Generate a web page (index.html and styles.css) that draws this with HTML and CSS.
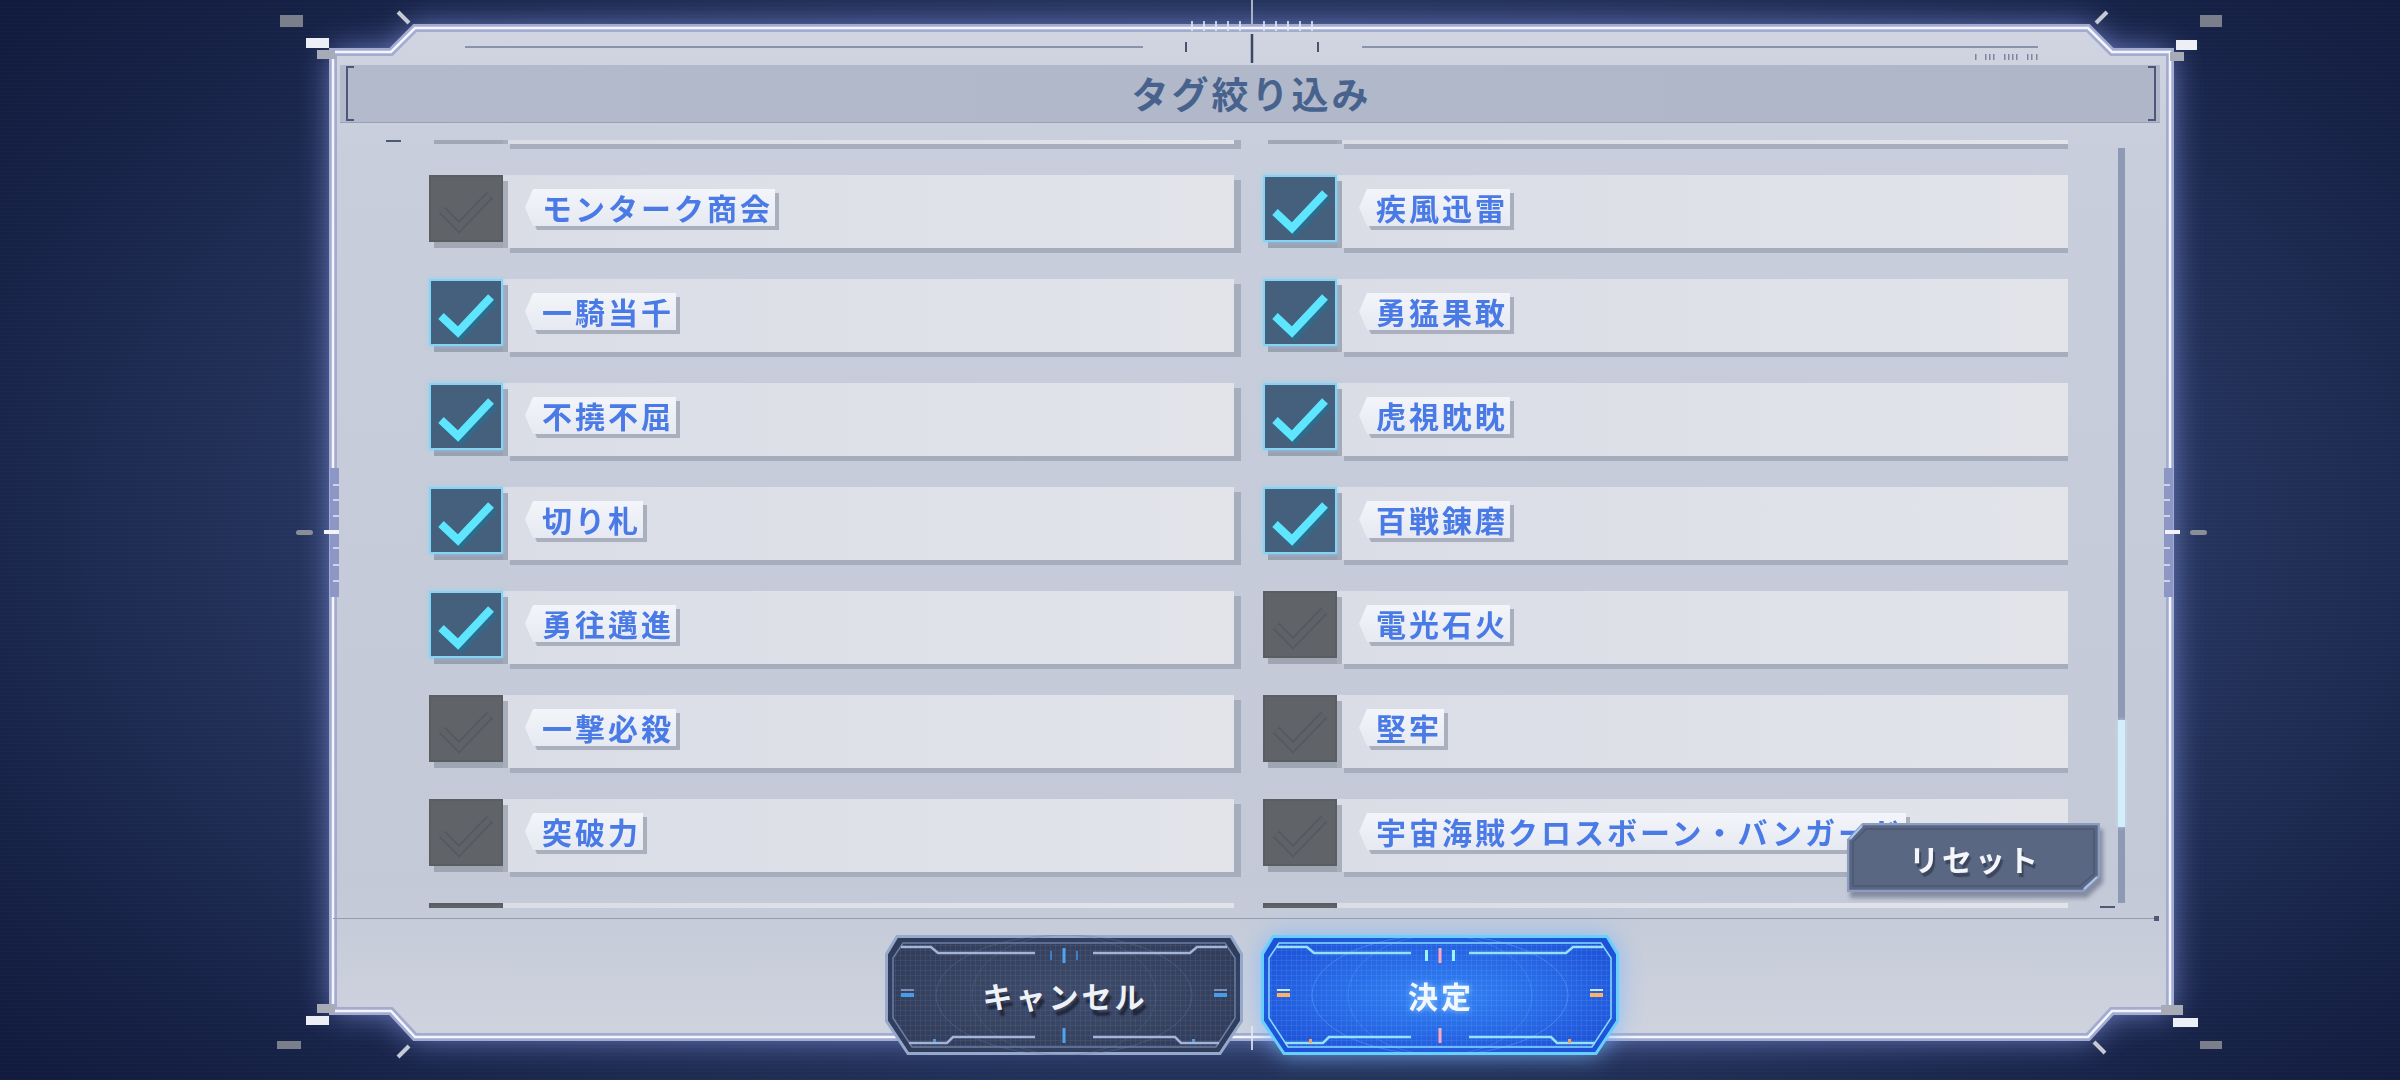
FILE: index.html
```html
<!DOCTYPE html>
<html lang="ja">
<head>
<meta charset="utf-8">
<title>タグ絞り込み</title>
<link rel="stylesheet" href="styles.css">
</head>
<body>
<svg class="defs" aria-hidden="true">
  <symbol id="chk-on" viewBox="0 0 70 63">
    <path d="M10 35 L27 51 L60 16" transform="translate(3 4)" fill="none" stroke="#2d6c8b" stroke-width="8"/>
    <path d="M10 35 L27 51 L60 16" fill="none" stroke="#5fe6ff" stroke-width="8"/>
  </symbol>
  <symbol id="chk-off" viewBox="0 0 70 63">
    <path d="M11 33 L28 50 L59 18" fill="none" stroke="#55585e" stroke-width="9"/>
    <path d="M11 33 L28 50 L59 18" fill="none" stroke="#5f6267" stroke-width="6"/>
  </symbol>
</svg>
<div class="screen">
  <div class="panel">
    <svg class="frame" viewBox="0 0 2400 1080" aria-hidden="true">
      <defs>
        <filter id="glow" x="-10%" y="-10%" width="120%" height="120%"><feGaussianBlur stdDeviation="16"/></filter>
        <linearGradient id="pfill" x1="0" y1="0" x2="0" y2="1">
          <stop offset="0" stop-color="#d0d5e1"/>
          <stop offset="0.12" stop-color="#c8cedb"/>
          <stop offset="0.85" stop-color="#c3c9d7"/>
          <stop offset="1" stop-color="#ced3de"/>
        </linearGradient>
      </defs>
      <polygon points="333,52 391,52 415,28 2088,28 2112,52 2170,52 2170,1011 2112,1011 2088,1037 415,1037 391,1011 333,1011" fill="#8597e6" opacity="0.85" filter="url(#glow)"/>
      <polygon points="333,52 391,52 415,28 2088,28 2112,52 2170,52 2170,1011 2112,1011 2088,1037 415,1037 391,1011 333,1011" fill="url(#pfill)"/>
      <polygon points="333,52 391,52 415,28 2088,28 2112,52 2170,52 2170,1011 2112,1011 2088,1037 415,1037 391,1011 333,1011" fill="none" stroke="#a3acd0" stroke-width="8"/>
      <polygon points="333,52 391,52 415,28 2088,28 2112,52 2170,52 2170,1011 2112,1011 2088,1037 415,1037 391,1011 333,1011" fill="none" stroke="#f4f6ff" stroke-width="2.5"/>
      <!-- top strip lines -->
      <line x1="465" y1="47" x2="1143" y2="47" stroke="#8a93ac" stroke-width="2"/>
      <line x1="1362" y1="47" x2="2038" y2="47" stroke="#8a93ac" stroke-width="2"/>
      <g fill="#7d869e">
        <rect x="1975" y="54" width="1.5" height="6"/>
        <rect x="1985" y="54" width="1.5" height="6"/><rect x="1989" y="54" width="1.5" height="6"/><rect x="1993" y="54" width="1.5" height="6"/>
        <rect x="2004" y="54" width="1.5" height="6"/><rect x="2008" y="54" width="1.5" height="6"/><rect x="2012" y="54" width="1.5" height="6"/><rect x="2016" y="54" width="1.5" height="6"/>
        <rect x="2027" y="54" width="1.5" height="6"/><rect x="2031" y="54" width="1.5" height="6"/><rect x="2036" y="54" width="1.5" height="6"/>
      </g>
      <!-- top ruler -->
      <line x1="1252" y1="0" x2="1252" y2="24" stroke="#a9b0c8" stroke-width="2"/>
      <line x1="1252" y1="34" x2="1252" y2="63" stroke="#3c4764" stroke-width="2.5"/>
      <g stroke="#e6eaf8" stroke-width="1.6">
        <line x1="1192" y1="21" x2="1192" y2="31"/><line x1="1204" y1="21" x2="1204" y2="31"/><line x1="1216" y1="21" x2="1216" y2="31"/><line x1="1228" y1="21" x2="1228" y2="31"/><line x1="1240" y1="21" x2="1240" y2="31"/>
        <line x1="1264" y1="21" x2="1264" y2="31"/><line x1="1276" y1="21" x2="1276" y2="31"/><line x1="1288" y1="21" x2="1288" y2="31"/><line x1="1300" y1="21" x2="1300" y2="31"/><line x1="1312" y1="21" x2="1312" y2="31"/>
      </g>
      <line x1="1186" y1="42" x2="1186" y2="52" stroke="#4a5470" stroke-width="2"/>
      <line x1="1318" y1="42" x2="1318" y2="52" stroke="#4a5470" stroke-width="2"/>
      <!-- bottom tick -->
      <line x1="1252" y1="1026" x2="1252" y2="1050" stroke="#eef1fb" stroke-width="1.6"/>
      <!-- left ruler -->
      <rect x="330" y="468" width="9" height="129" fill="#8c97c6"/>
      <g stroke="#e4e8f6" stroke-width="1.5">
        <line x1="333" y1="485" x2="339" y2="485"/><line x1="333" y1="500" x2="339" y2="500"/><line x1="333" y1="516" x2="339" y2="516"/>
        <line x1="333" y1="548" x2="339" y2="548"/><line x1="333" y1="565" x2="339" y2="565"/><line x1="333" y1="581" x2="339" y2="581"/>
      </g>
      <rect x="324" y="530" width="15" height="4" fill="#f2f4fa"/>
      <rect x="296" y="530" width="17" height="5" rx="2.5" fill="#8b8e98"/>
      <!-- right ruler -->
      <rect x="2164" y="468" width="9" height="129" fill="#8c97c6"/>
      <g stroke="#e4e8f6" stroke-width="1.5">
        <line x1="2164" y1="485" x2="2170" y2="485"/><line x1="2164" y1="500" x2="2170" y2="500"/><line x1="2164" y1="516" x2="2170" y2="516"/>
        <line x1="2164" y1="548" x2="2170" y2="548"/><line x1="2164" y1="565" x2="2170" y2="565"/><line x1="2164" y1="581" x2="2170" y2="581"/>
      </g>
      <rect x="2165" y="530" width="15" height="4" fill="#f2f4fa"/>
      <rect x="2190" y="530" width="17" height="5" rx="2.5" fill="#8b8e98"/>
      <!-- corner decorations -->
      <rect x="280" y="15" width="23" height="12" fill="#8c8f98" opacity="0.85"/>
      <rect x="306" y="38" width="23" height="10" fill="#eceff6"/>
      <rect x="317" y="50" width="18" height="9" fill="#a7abb5"/>
      <line x1="398" y1="12" x2="409" y2="23" stroke="#c5c9d4" stroke-width="4"/>
      <rect x="2200" y="15" width="22" height="12" fill="#8c8f98" opacity="0.85"/>
      <rect x="2176" y="40" width="21" height="10" fill="#eceff6"/>
      <rect x="2170" y="52" width="14" height="9" fill="#a7abb5"/>
      <line x1="2107" y1="12" x2="2096" y2="23" stroke="#c5c9d4" stroke-width="4"/>
      <rect x="277" y="1041" width="24" height="8" fill="#8c8f98" opacity="0.85"/>
      <rect x="306" y="1016" width="23" height="9" fill="#eceff6"/>
      <rect x="317" y="1004" width="18" height="9" fill="#a7abb5"/>
      <line x1="398" y1="1057" x2="409" y2="1046" stroke="#c5c9d4" stroke-width="4"/>
      <rect x="2200" y="1041" width="22" height="8" fill="#8c8f98" opacity="0.85"/>
      <rect x="2173" y="1018" width="25" height="9" fill="#eceff6"/>
      <rect x="2161" y="1005" width="22" height="10" fill="#a7abb5"/>
      <line x1="2094" y1="1042" x2="2105" y2="1053" stroke="#c5c9d4" stroke-width="4"/>
    </svg>

    <div class="top-strip"></div>
    <div class="header"><h1 class="title">タグ絞り込み</h1></div>

    <div class="viewport">
      <div class="list">
        <div class="grid">
          <div class="item"><div class="cb"><svg class="mark"><use href="#chk-off"/></svg></div><div class="bar"></div></div>
          <div class="item"><div class="cb"><svg class="mark"><use href="#chk-off"/></svg></div><div class="bar"></div></div>

          <div class="item"><div class="cb"><svg class="mark"><use href="#chk-off"/></svg></div><div class="bar"><span class="tag"><span class="tag-in">モンターク商会</span></span></div></div>
          <div class="item"><div class="cb on"><svg class="mark"><use href="#chk-on"/></svg></div><div class="bar"><span class="tag"><span class="tag-in">疾風迅雷</span></span></div></div>

          <div class="item"><div class="cb on"><svg class="mark"><use href="#chk-on"/></svg></div><div class="bar"><span class="tag"><span class="tag-in">一騎当千</span></span></div></div>
          <div class="item"><div class="cb on"><svg class="mark"><use href="#chk-on"/></svg></div><div class="bar"><span class="tag"><span class="tag-in">勇猛果敢</span></span></div></div>

          <div class="item"><div class="cb on"><svg class="mark"><use href="#chk-on"/></svg></div><div class="bar"><span class="tag"><span class="tag-in">不撓不屈</span></span></div></div>
          <div class="item"><div class="cb on"><svg class="mark"><use href="#chk-on"/></svg></div><div class="bar"><span class="tag"><span class="tag-in">虎視眈眈</span></span></div></div>

          <div class="item"><div class="cb on"><svg class="mark"><use href="#chk-on"/></svg></div><div class="bar"><span class="tag"><span class="tag-in">切り札</span></span></div></div>
          <div class="item"><div class="cb on"><svg class="mark"><use href="#chk-on"/></svg></div><div class="bar"><span class="tag"><span class="tag-in">百戦錬磨</span></span></div></div>

          <div class="item"><div class="cb on"><svg class="mark"><use href="#chk-on"/></svg></div><div class="bar"><span class="tag"><span class="tag-in">勇往邁進</span></span></div></div>
          <div class="item"><div class="cb"><svg class="mark"><use href="#chk-off"/></svg></div><div class="bar"><span class="tag"><span class="tag-in">電光石火</span></span></div></div>

          <div class="item"><div class="cb"><svg class="mark"><use href="#chk-off"/></svg></div><div class="bar"><span class="tag"><span class="tag-in">一撃必殺</span></span></div></div>
          <div class="item"><div class="cb"><svg class="mark"><use href="#chk-off"/></svg></div><div class="bar"><span class="tag"><span class="tag-in">堅牢</span></span></div></div>

          <div class="item"><div class="cb"><svg class="mark"><use href="#chk-off"/></svg></div><div class="bar"><span class="tag"><span class="tag-in">突破力</span></span></div></div>
          <div class="item"><div class="cb"><svg class="mark"><use href="#chk-off"/></svg></div><div class="bar"><span class="tag"><span class="tag-in">宇宙海賊クロスボーン・バンガード</span></span></div></div>

          <div class="item"><div class="cb"><svg class="mark"><use href="#chk-off"/></svg></div><div class="bar"></div></div>
          <div class="item"><div class="cb"><svg class="mark"><use href="#chk-off"/></svg></div><div class="bar"></div></div>
        </div>
      </div>
      <div class="scrollbar"><div class="thumb"></div></div>

      <div class="reset">
        <svg viewBox="0 0 253 69" aria-hidden="true">
          <polygon points="16,1 252,1 252,53 236,68 1,68 1,17" fill="#5a6783" stroke="#8d9cc0" stroke-width="2.5"/>
          <polygon points="19,6 247,6 247,51 233,63 6,63 6,19" fill="none" stroke="#4b5773" stroke-width="1.5"/>
          <path d="M3 16 L15 3" stroke="#a9c6ef" stroke-width="2"/>
          <path d="M250 54 L237 66" stroke="#a9c6ef" stroke-width="2"/>
        </svg>
        <span>リセット</span>
      </div>
    </div>

    <div class="divider"></div>

    <div class="actions">
      <div class="btn cancel">
        <svg viewBox="0 0 358 120" aria-hidden="true">
          <defs>
            <pattern id="gridc" width="5" height="5" patternUnits="userSpaceOnUse"><path d="M5 0H0V5" fill="none" stroke="#8596ba" stroke-opacity="0.22" stroke-width="1"/></pattern>
            <radialGradient id="cfill" cx="0.5" cy="0.5" r="0.6"><stop offset="0" stop-color="#3e4b6a"/><stop offset="1" stop-color="#303c59"/></radialGradient>
          </defs>
          <polygon points="12,1.5 346,1.5 356.5,19 356.5,86 335,118.5 23,118.5 1.5,86 1.5,19" fill="url(#cfill)" stroke="#95a8cd" stroke-width="3"/>
          <polygon points="18,8 340,8 350,23 350,83 331,112 27,112 8,83 8,23" fill="url(#gridc)" stroke="#6a7da5" stroke-width="1.5"/>
          <ellipse cx="179" cy="60" rx="128" ry="60" fill="none" stroke="#6a7ba0" stroke-opacity="0.35"/>
          <ellipse cx="179" cy="60" rx="92" ry="60" fill="none" stroke="#6a7ba0" stroke-opacity="0.25"/>
          <g fill="none" stroke="#a3b4d6" stroke-width="2.5">
            <path d="M16 12 H46 L53 18 H150"/>
            <path d="M342 12 H312 L305 18 H208"/>
            <path d="M24 108 H62 L68 102 H150"/>
            <path d="M334 108 H296 L290 102 H208"/>
          </g>
          <rect x="177.5" y="13" width="3" height="15" fill="#4fa3f0"/>
          <rect x="165" y="16" width="2" height="9" fill="#3e7fc6"/>
          <rect x="191" y="16" width="2" height="9" fill="#3e7fc6"/>
          <rect x="177.5" y="93" width="3" height="15" fill="#4fa3f0"/>
          <rect x="16" y="58" width="13" height="4" fill="#4a9be6"/>
          <rect x="16" y="54" width="13" height="2" fill="#7e90b5"/>
          <rect x="329" y="58" width="13" height="4" fill="#4a9be6"/>
          <rect x="329" y="54" width="13" height="2" fill="#7e90b5"/>
          <rect x="48" y="104" width="3" height="3" fill="#4a9be6"/>
          <rect x="307" y="104" width="3" height="3" fill="#4a9be6"/>
        </svg>
        <span>キャンセル</span>
      </div>
      <div class="btn ok">
        <svg viewBox="0 0 358 120" aria-hidden="true">
          <defs>
            <pattern id="gridk" width="5" height="5" patternUnits="userSpaceOnUse"><path d="M5 0H0V5" fill="none" stroke="#a8d4ff" stroke-opacity="0.2" stroke-width="1"/></pattern>
            <radialGradient id="kfill" cx="0.5" cy="0.5" r="0.6"><stop offset="0" stop-color="#3283f5"/><stop offset="1" stop-color="#1d52d8"/></radialGradient>
          </defs>
          <polygon points="12,1.5 346,1.5 356.5,19 356.5,86 335,118.5 23,118.5 1.5,86 1.5,19" fill="url(#kfill)" stroke="#66d0ff" stroke-width="3"/>
          <polygon points="18,8 340,8 350,23 350,83 331,112 27,112 8,83 8,23" fill="url(#gridk)" stroke="#88dbff" stroke-width="1.5"/>
          <ellipse cx="179" cy="60" rx="128" ry="60" fill="none" stroke="#8fc6ff" stroke-opacity="0.3"/>
          <ellipse cx="179" cy="60" rx="92" ry="60" fill="none" stroke="#8fc6ff" stroke-opacity="0.2"/>
          <g fill="none" stroke="#93e3ff" stroke-width="2.5">
            <path d="M16 12 H46 L53 18 H150"/>
            <path d="M342 12 H312 L305 18 H208"/>
            <path d="M24 108 H62 L68 102 H150"/>
            <path d="M334 108 H296 L290 102 H208"/>
          </g>
          <rect x="177.5" y="13" width="3" height="15" fill="#ffa7bd"/>
          <rect x="164" y="15" width="3" height="11" fill="#9af4ff"/>
          <rect x="191" y="15" width="3" height="11" fill="#9af4ff"/>
          <rect x="177.5" y="93" width="3" height="15" fill="#ffa7bd"/>
          <rect x="16" y="58" width="13" height="4" fill="#ffb264"/>
          <rect x="16" y="54" width="13" height="2" fill="#c9e6ff"/>
          <rect x="329" y="58" width="13" height="4" fill="#ffb264"/>
          <rect x="329" y="54" width="13" height="2" fill="#c9e6ff"/>
          <rect x="48" y="104" width="3" height="4" fill="#ffa050"/>
          <rect x="307" y="104" width="3" height="4" fill="#ffa050"/>
        </svg>
        <span>決定</span>
      </div>
    </div>
  </div>
</div>
</body>
</html>
```

FILE: styles.css
```css
* { box-sizing: border-box; }

html, body {
  margin: 0;
  width: 2400px;
  height: 1080px;
  overflow: hidden;
}

body {
  font-family: "Noto Sans CJK JP", "Noto Sans", sans-serif;
  background:
    repeating-linear-gradient(0deg, rgba(255,255,255,0.018) 0 1px, transparent 1px 4px),
    radial-gradient(ellipse 78% 95% at 52% 50%, #2b3b6b 0%, #26365f 48%, #162146 72%, #0b1331 100%);
}

.defs {
  position: absolute;
  width: 0;
  height: 0;
  overflow: hidden;
}

.screen {
  padding: 28px 0 0 333px;
  height: 1080px;
}

.panel {
  position: relative;
  width: 1837px;
  height: 1009px;
  display: flex;
  flex-direction: column;
}

.frame {
  position: absolute;
  left: -333px;
  top: -28px;
  width: 2400px;
  height: 1080px;
  z-index: 0;
  pointer-events: none;
}

.top-strip,
.header,
.viewport,
.divider,
.actions {
  position: relative;
  z-index: 1;
}

.top-strip {
  flex: none;
  height: 37px;
}

.header {
  flex: none;
  height: 58px;
  margin: 0 10px 0 7px;
  background: linear-gradient(90deg, #b3bacb, #afb6c7);
  border-bottom: 1px solid #98a1b5;
  display: flex;
  align-items: center;
  justify-content: center;
}

.header::before,
.header::after {
  content: "";
  position: absolute;
  top: 1px;
  bottom: 1px;
  width: 6px;
  border: 2.5px solid #4b5878;
}

.header::before { left: 6px; border-right: none; }
.header::after { right: 4px; border-left: none; }

.title {
  margin: 0;
  font-size: 37px;
  font-weight: 700;
  line-height: 1;
  letter-spacing: 3px;
  padding-left: 3px;
  color: #47628d;
}

.viewport {
  flex: none;
  width: 1754px;
  height: 768px;
  margin: 17px 0 0 53px;
  display: flex;
}

.viewport::before,
.viewport::after {
  content: "";
  position: absolute;
  height: 2px;
  width: 15px;
  background: #4e5a74;
}

.viewport::before { left: 0; top: 0; }
.viewport::after { right: 25px; bottom: 0; }

.list {
  flex: none;
  width: 1682px;
  height: 100%;
  overflow: hidden;
  padding-left: 43px;
}

.grid {
  margin-top: -69px;
  display: grid;
  grid-template-columns: 805px 805px;
  column-gap: 29px;
  row-gap: 31px;
}

.item {
  display: flex;
  height: 73px;
}

.cb {
  position: relative;
  z-index: 1;
  flex: none;
  width: 74px;
  height: 67px;
  background: #606368;
  border: 2px solid #5a5d62;
  box-shadow: 5px 6px 0 rgba(128, 134, 150, 0.55);
}

.cb.on {
  background: #45607d;
  border-color: #86d3f3;
  box-shadow: 0 0 4px rgba(130, 215, 255, 0.7), 5px 6px 0 rgba(118, 126, 146, 0.55);
}

.mark {
  display: block;
  width: 70px;
  height: 63px;
}

.bar {
  flex: 1;
  height: 73px;
  background: linear-gradient(90deg, #dadde6, #e2e4ea);
  box-shadow: 7px 5px 0 #a6adbc;
  display: flex;
  align-items: flex-start;
}

.tag {
  margin: 14px 0 0 22px;
  filter: drop-shadow(4px 4px 0 #a9afbd);
}

.tag-in {
  display: block;
  height: 37px;
  line-height: 37px;
  padding: 0 2px 0 17px;
  background: linear-gradient(#f3f5fa, #e6e9f1);
  clip-path: polygon(8px 0, 100% 0, 100% 100%, 8px 100%, 0 50%);
  font-size: 30px;
  font-weight: 700;
  letter-spacing: 3px;
  color: #4a7ae6;
  white-space: nowrap;
}

.scrollbar {
  flex: none;
  width: 7px;
  margin: 8px 15px 5px 50px;
  background: #8e9ab4;
  display: flex;
  flex-direction: column;
}

.thumb {
  margin-top: 572px;
  height: 107px;
  background: #d3eefb;
  box-shadow: 0 0 4px rgba(200, 240, 255, 0.7);
}

.reset {
  position: absolute;
  left: 1461px;
  top: 683px;
  width: 253px;
  height: 69px;
  z-index: 3;
  display: flex;
  align-items: center;
  justify-content: center;
  filter: drop-shadow(3px 6px 2px rgba(80, 90, 115, 0.55));
}

.reset svg {
  position: absolute;
  inset: 0;
  width: 100%;
  height: 100%;
}

.reset span {
  position: relative;
  font-size: 30px;
  font-weight: 700;
  letter-spacing: 3px;
  padding-left: 3px;
  color: #f4f6fa;
  text-shadow: 2px 4px 1px rgba(40, 48, 66, 0.6);
}

.divider {
  flex: none;
  height: 1px;
  margin: 10px 13px 0 0;
  background: #959db0;
}

.divider::after {
  content: "";
  position: absolute;
  right: -2px;
  top: -2px;
  width: 5px;
  height: 5px;
  background: #4e5a74;
}

.actions {
  flex: none;
  display: flex;
  justify-content: center;
  gap: 18px;
  padding-top: 16px;
}

.btn {
  position: relative;
  width: 358px;
  height: 120px;
  display: flex;
  align-items: center;
  justify-content: center;
}

.btn svg {
  position: absolute;
  inset: 0;
  width: 100%;
  height: 100%;
}

.btn span {
  position: relative;
  font-size: 30px;
  font-weight: 700;
  letter-spacing: 3px;
  padding-left: 3px;
  color: #eef1f6;
}

.cancel span {
  text-shadow: 3px 6px 2px rgba(20, 26, 40, 0.7);
}

.ok {
  filter: drop-shadow(0 0 12px rgba(120, 180, 255, 0.75));
}

.ok span {
  color: #f3f8ff;
  text-shadow: 0 0 6px rgba(170, 220, 255, 0.8);
}
```
